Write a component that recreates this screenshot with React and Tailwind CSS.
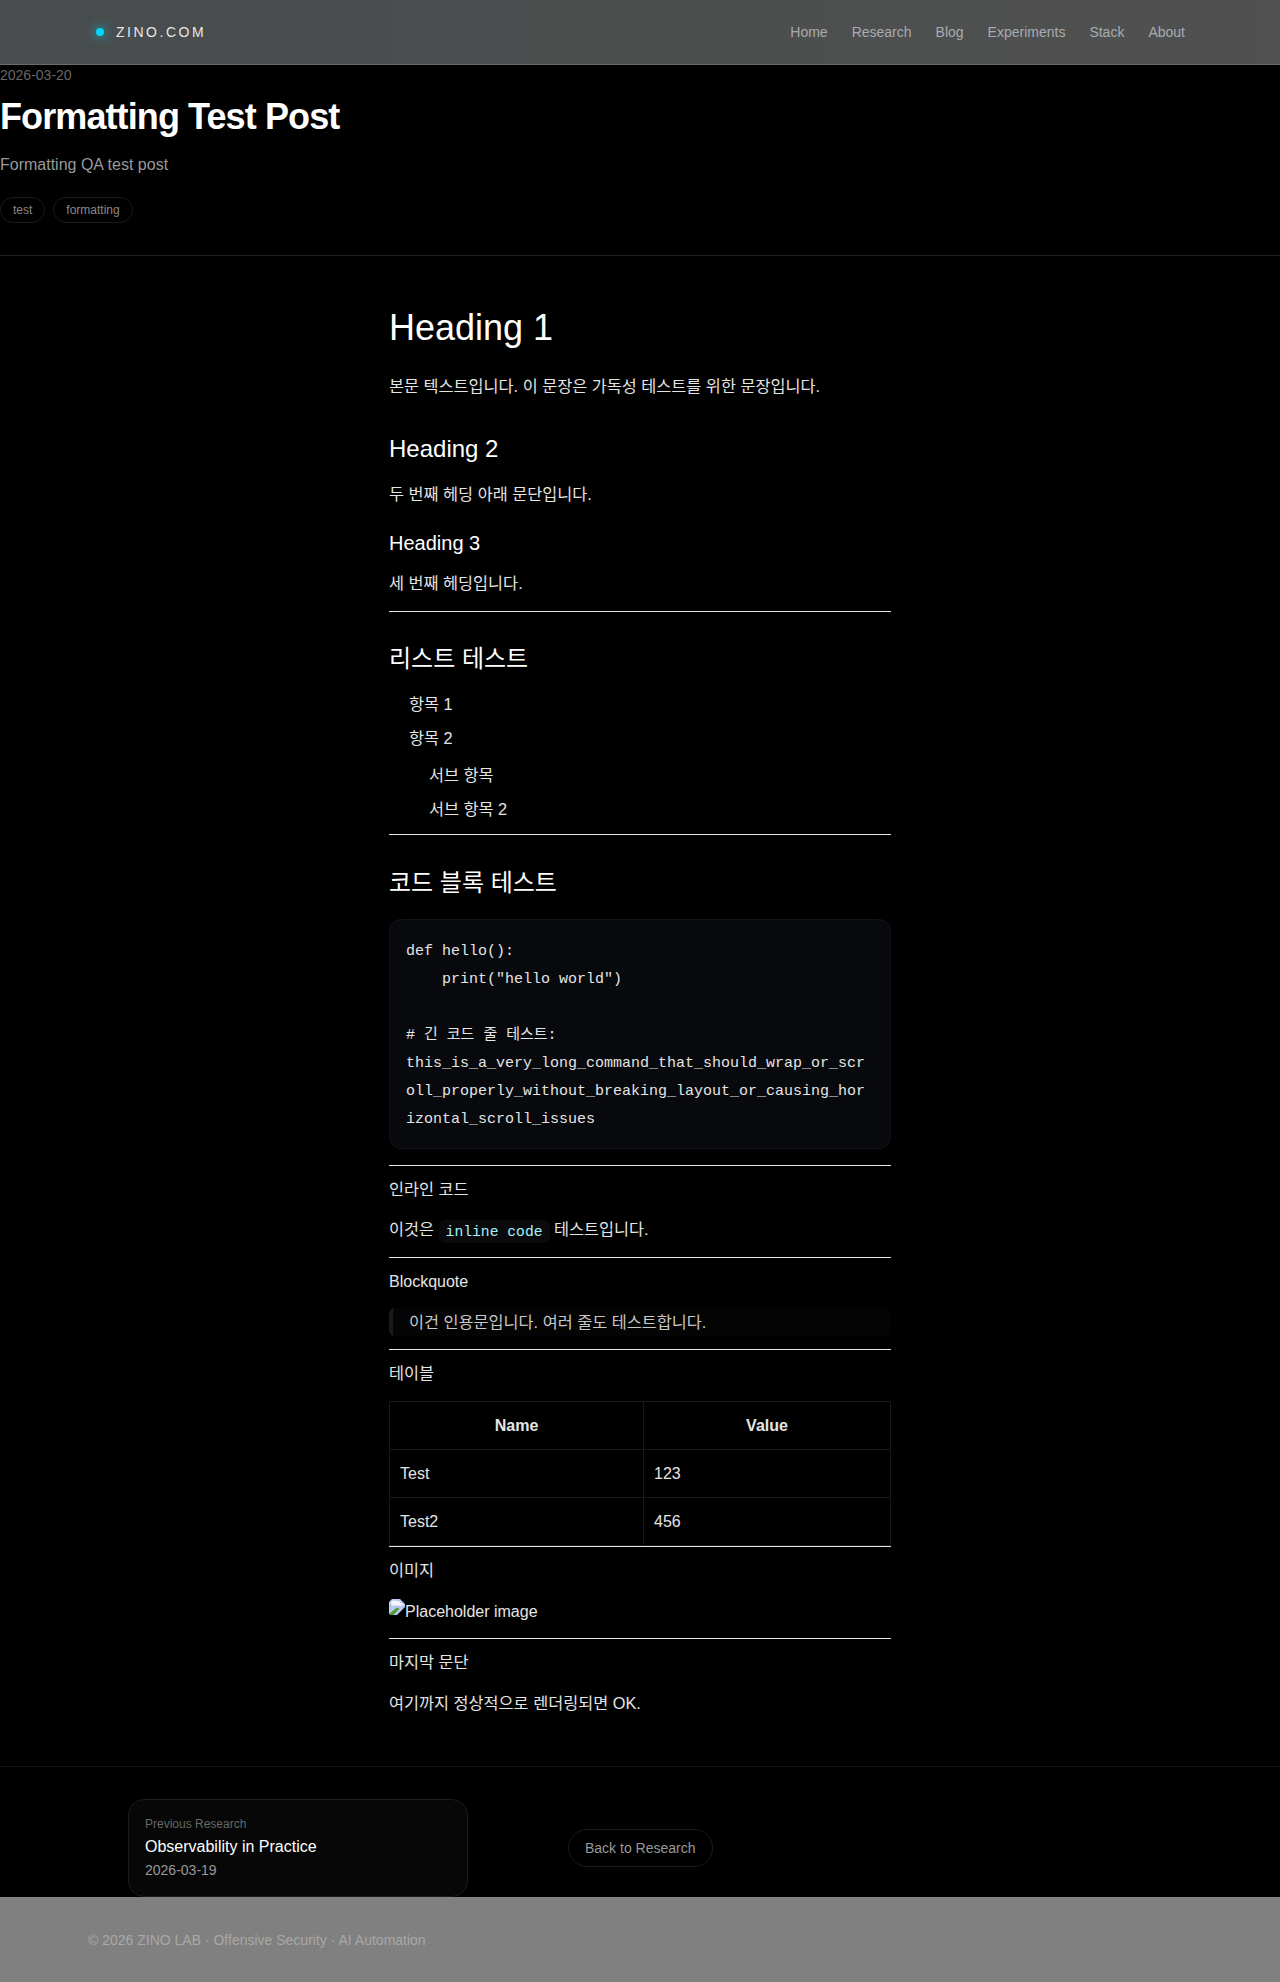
const sans = "font-['Liberation_Sans','Noto_Sans_CJK_KR',sans-serif]";
const mono = "font-['Liberation_Mono','Noto_Sans_CJK_KR',monospace]";

const navLinks = ['Home', 'Research', 'Blog', 'Experiments', 'Stack', 'About'];
const cell = 'border border-[#181818] px-2.5 py-[9.5px]';
const ko = 'text-[16.32px]';

function Rule({ className }) {
  return <hr className={`border-0 border-t border-[#e5e7eb] ${className}`} />;
}

function BrokenImage() {
  return (
    <svg width="16" height="16" viewBox="0 0 16 16" className="inline-block align-[2px]">
      <path d="M0 3 3 0h8l5 5v3l-8 8H1.500L0 14.500z" fill="#b9c9ee" />
      <path d="M3 2c1-1 3-1 4 0 2-.5 4 .5 4.500 2 1.500 0 3 1 3 2.500H4C2 6.500 1.500 3.500 3 2z" fill="#f4f6fc" />
      <path d="M0 15 8 8.500l2.500 1L4.500 16h-3L0 14.500z" fill="#4d9a38" />
    </svg>
  );
}

export default function App() {
  return (
    <div className={`min-h-[1982px] bg-black text-[#e5e5e5] ${sans}`}>
      <header className="flex h-[65px] items-center justify-between border-b border-[#6a6c6c] bg-gradient-to-r from-[#484c4d] to-[#505050] pl-[88px] pr-[95px]">
        <div className="flex items-center gap-3">
          <span className="ml-2 h-2 w-2 rounded-full bg-[#00d4ff] shadow-[0_0_12px_#00d4ff]" />
          <span className="text-sm tracking-[0.18em] text-[#e5e7eb]">ZINO.COM</span>
        </div>
        <nav className="flex gap-6">
          {navLinks.map((link) => (
            <a key={link} className="text-sm text-[#a8acb0]">{link}</a>
          ))}
        </nav>
      </header>

      <section className="border-b border-[#1c1c1c] pb-8">
        <div className="text-sm leading-5 text-[#666666]">2026-03-20</div>
        <h1 className="mt-3 text-4xl leading-10 font-bold tracking-tight text-white">Formatting Test Post</h1>
        <p className="mt-4 text-base text-[#999999]">Formatting QA test post</p>
        <div className="mt-5 flex gap-2">
          <span className="rounded-full border border-[#1a1a1a] px-3 py-1 text-xs text-[#888888]">test</span>
          <span className="rounded-full border border-[#1a1a1a] px-3 py-1 text-xs text-[#888888]">formatting</span>
        </div>
      </section>

      <article className="mx-auto w-[502px] text-base leading-7">
        <h1 className="mt-[50px] text-4xl leading-[44px] font-normal text-white">Heading 1</h1>
        <p className={`mt-[22px] ${ko}`}>본문 텍스트입니다. 이 문장은 가독성 테스트를 위한 문장입니다.</p>
        <h2 className="mt-[33px] text-2xl leading-8 text-white">Heading 2</h2>
        <p className={`mt-[15px] ${ko}`}>두 번째 헤딩 아래 문단입니다.</p>
        <h3 className="mt-[21px] text-xl leading-7 text-white">Heading 3</h3>
        <p className={`mt-3 ${ko}`}>세 번째 헤딩입니다.</p>
        <Rule className="mt-3.5" />
        <h2 className="mt-[31px] text-2xl leading-8 text-white">리스트 테스트</h2>
        <ul className={`mt-[15px] pl-5 ${ko}`}>
          <li className="mb-1.5">항목 1</li>
          <li>항목 2
            <ul className="mt-[9px] pl-5">
              <li className="mb-1.5">서브 항목</li>
              <li>서브 항목 2</li>
            </ul>
          </li>
        </ul>
        <Rule className="mt-[11px]" />
        <h2 className="mt-8 text-2xl leading-8 text-white">코드 블록 테스트</h2>
        <pre className={`mt-5 rounded-xl border border-[#12141a] bg-[#08090d] px-4 pt-[18px] pb-3.5 ${mono} text-[15px] leading-7 break-all whitespace-pre-wrap`}>{`def hello():
    print("hello world")

# 긴 코드 줄 테스트:
this_is_a_very_long_command_that_should_wrap_or_scroll_properly_without_breaking_layout_or_causing_horizontal_scroll_issues`}</pre>
        <Rule className="mt-4" />
        <p className={`mt-[9px] ${ko}`}>인라인 코드</p>
        <p className={`mt-3 h-7 ${ko}`}>이것은 <code className={`rounded-md bg-[#0a0a0d] px-[7px] py-[3.5px] ${mono} text-[14.7px] text-[#a5f3fc]`}>inline code</code> 테스트입니다.</p>
        <Rule className="mt-3.5" />
        <p className="mt-2.5">Blockquote</p>
        <blockquote className={`mt-3 rounded-md border-l-4 border-[#1a1a1a] bg-[#040404] pl-4 text-[#c8c8c8] ${ko}`}>이건 인용문입니다. 여러 줄도 테스트합니다.</blockquote>
        <Rule className="mt-[13px]" />
        <p className={`mt-[9px] ${ko}`}>테이블</p>
        <table className="mt-3.5 w-full border-collapse">
          <thead>
            <tr>
              <th className={`w-[254px] ${cell} font-bold`}>Name</th>
              <th className={`${cell} font-bold`}>Value</th>
            </tr>
          </thead>
          <tbody>
            <tr>
              <td className={cell}>Test</td>
              <td className={cell}>123</td>
            </tr>
            <tr>
              <td className={cell}>Test2</td>
              <td className={cell}>456</td>
            </tr>
          </tbody>
        </table>
        <Rule />
        <p className={`mt-[9px] ${ko}`}>이미지</p>
        <p className="mt-3.5"><BrokenImage />Placeholder image</p>
        <Rule className="mt-3" />
        <p className={`mt-[9px] ${ko}`}>마지막 문단</p>
        <p className={`mt-[13px] ${ko}`}>여기까지 정상적으로 렌더링되면 OK.</p>
      </article>

      <section className="mt-[49px] border-t border-[#141414]">
        <div className="flex items-center pt-8 pl-32">
          <div className="h-[98px] w-[340px] rounded-2xl border border-[#1c1c1c] bg-[#070707] px-4 pt-4">
            <div className="text-xs text-[#666666]">Previous Research</div>
            <div className="mt-[3px] text-base leading-6 text-white">Observability in Practice</div>
            <div className="mt-px text-sm text-[#999999]">2026-03-19</div>
          </div>
          <a className="ml-[100px] rounded-full border border-[#1a1a1a] px-4 py-2 text-sm text-[#999999]">Back to Research</a>
        </div>
      </section>

      <footer className="flex h-[85px] items-center bg-[#808080] pl-[88px] text-sm text-[#a8a8a8]">© 2026 ZINO LAB · Offensive Security · AI Automation</footer>
    </div>
  );
}
